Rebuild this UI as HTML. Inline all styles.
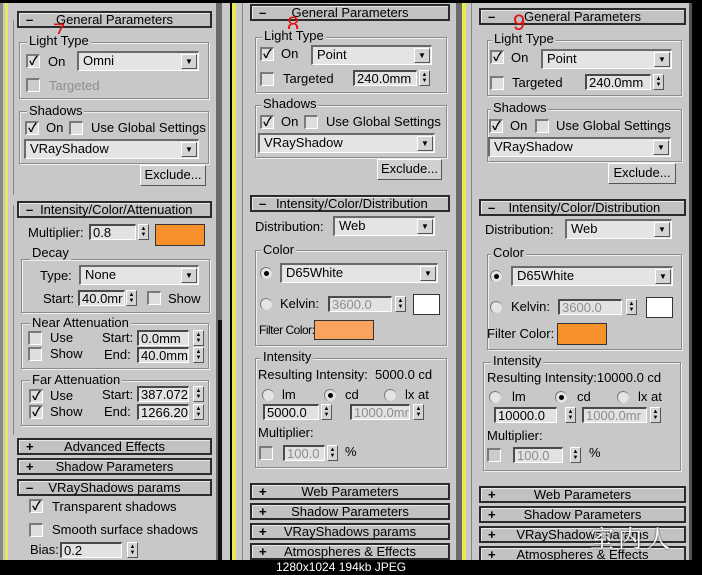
<!DOCTYPE html>
<html><head><meta charset="utf-8"><style>
*{box-sizing:border-box;margin:0;padding:0}
body{width:702px;height:575px;background:#000;position:relative;overflow:hidden;font-family:"Liberation Sans","Noto Sans CJK SC",sans-serif;font-size:13px;color:#000}
div,span{position:absolute}
.p{background:#c8c8c8}
.h{height:17px;border:2px solid #2b2b2b;background:#c2c2c2;text-align:center;line-height:13px;font-size:13px;box-shadow:inset 1px 1px 0 #e8e8e8}
.h b{position:absolute;left:7px;top:0;font-weight:bold}
.g{border:1px solid #8a8a8a;box-shadow:1px 1px 0 #eee,inset 1px 1px 0 #eee}
.l{background:#c8c8c8;padding:0 2px;line-height:14px;white-space:nowrap}
.t{line-height:14px;white-space:nowrap}
.d{color:#8e8e8e}
.cb{width:14px;height:14px;background:#dedede;border-top:2px solid #7a7a7a;border-left:2px solid #7a7a7a;border-right:1px solid #fff;border-bottom:1px solid #fff;font-size:12px;line-height:11px;text-align:center;font-weight:bold}
.dd{height:20px;background:#e4e4e4;border-top:2px solid #6a6a6a;border-left:2px solid #6a6a6a;border-right:1px solid #fff;border-bottom:1px solid #fff;line-height:16px;padding-left:4px;white-space:nowrap}
.dd i{position:absolute;right:1px;top:1px;width:16px;height:15px;background:#d4d4d4;border:1px solid #fff;border-right-color:#555;border-bottom-color:#555;font-style:normal;font-size:8px;line-height:13px;text-align:center}
.f{height:16px;background:#e2e2e2;border-top:2px solid #4a4a4a;border-left:2px solid #4a4a4a;border-right:1px solid #fff;border-bottom:1px solid #fff;line-height:13px;padding-left:2px;white-space:nowrap;overflow:hidden}
.s{width:11px;height:16px;background:#d4d4d4;border:1px solid #fff;border-right-color:#555;border-bottom-color:#555;font-size:6px;line-height:6px;text-align:center;padding-top:1px}
.r{width:12px;height:12px;border-radius:50%;background:#e4e4e4;border-top:1px solid #777;border-left:1px solid #777}
.r.on::after{content:"";position:absolute;left:3px;top:3px;width:5px;height:5px;border-radius:50%;background:#000}
.btn{background:#d0d0d0;border:1px solid #fff;border-right-color:#555;border-bottom-color:#555;text-align:center;line-height:18px}
.sw{border:1px solid #333}
.num{color:#e01010;font-size:22px;line-height:22px}
</style></head><body>

<div class="p" style="left:3px;top:3px;width:227px;height:557px"></div>
<div style="left:0;top:3px;width:3px;height:557px;background:#888"></div>
<div style="left:5px;top:3px;width:3px;height:557px;background:#e8e860"></div>
<div style="left:216px;top:3px;width:6px;height:557px;background:#6a6a6a"></div>
<div style="left:218px;top:320px;width:4px;height:240px;background:#111"></div>
<div style="left:232px;top:3px;width:4px;height:557px;background:#e8e850"></div>
<div class="p" style="left:236px;top:3px;width:220px;height:557px"></div>
<div style="left:242px;top:3px;width:1px;height:557px;background:#888"></div>
<div style="left:456px;top:3px;width:6px;height:557px;background:#6a6a6a"></div>
<div style="left:462px;top:3px;width:4px;height:557px;background:#e8e850"></div>
<div class="p" style="left:466px;top:3px;width:226px;height:557px"></div>
<div style="left:471px;top:3px;width:1px;height:557px;background:#888"></div>
<div style="left:689px;top:3px;width:3px;height:557px;background:#555"></div>

<!-- PANEL 1 -->
<div style="left:13px;top:20px;width:1px;height:175px;background:#888"></div>
<div class="h" style="left:17px;top:11px;width:195px"><b>–</b>General Parameters</div>
<div class="num" style="left:53px;top:21px">7</div>
<div class="g" style="left:19px;top:42px;width:190px;height:57px"></div>
<div class="l" style="left:27px;top:34px">Light Type</div>
<div class="cb" style="left:26px;top:54px">✓</div><div class="t" style="left:48px;top:55px">On</div>
<div class="dd" style="left:77px;top:51px;width:122px">Omni<i>▼</i></div>
<div class="cb" style="left:26px;top:78px;background:#ccc"></div><div class="t d" style="left:49px;top:79px">Targeted</div>
<div class="g" style="left:19px;top:111px;width:190px;height:53px"></div>
<div class="l" style="left:27px;top:104px">Shadows</div>
<div class="cb" style="left:25px;top:121px">✓</div><div class="t" style="left:46px;top:121px">On</div>
<div class="cb" style="left:69px;top:121px"></div><div class="t" style="left:91px;top:121px">Use Global Settings</div>
<div class="dd" style="left:24px;top:139px;width:175px">VRayShadow<i>▼</i></div>
<div class="btn" style="left:140px;top:165px;width:66px;height:21px">Exclude...</div>
<div style="left:13px;top:205px;width:1px;height:230px;background:#888"></div>
<div class="h" style="left:17px;top:201px;width:195px"><b>–</b>&nbsp;Intensity/Color/Attenuation</div>
<div class="t" style="left:28px;top:226px">Multiplier:</div>
<div class="f" style="left:89px;top:224px;width:47px">0.8</div><div class="s" style="left:138px;top:224px">▲<br>▼</div>
<div class="sw" style="left:155px;top:224px;width:50px;height:22px;background:#f7902a"></div>
<div class="g" style="left:21px;top:259px;width:189px;height:54px"></div>
<div class="l" style="left:30px;top:246px">Decay</div>
<div class="t" style="left:40px;top:269px">Type:</div>
<div class="dd" style="left:79px;top:265px;width:120px">None<i>▼</i></div>
<div class="t" style="left:43px;top:292px">Start:</div>
<div class="f" style="left:78px;top:290px;width:47px">40.0mr</div><div class="s" style="left:126px;top:290px">▲<br>▼</div>
<div class="cb" style="left:147px;top:291px"></div><div class="t" style="left:168px;top:292px">Show</div>
<div class="g" style="left:21px;top:323px;width:188px;height:46px"></div>
<div class="l" style="left:30px;top:316px">Near Attenuation</div>
<div class="cb" style="left:28px;top:331px"></div><div class="t" style="left:50px;top:331px">Use</div>
<div class="t" style="left:102px;top:331px">Start:</div><div class="f" style="left:137px;top:330px;width:52px">0.0mm</div><div class="s" style="left:193px;top:330px">▲<br>▼</div>
<div class="cb" style="left:28px;top:347px"></div><div class="t" style="left:50px;top:347px">Show</div>
<div class="t" style="left:104px;top:348px">End:</div><div class="f" style="left:137px;top:347px;width:52px">40.0mm</div><div class="s" style="left:193px;top:347px">▲<br>▼</div>
<div class="g" style="left:21px;top:380px;width:188px;height:46px"></div>
<div class="l" style="left:30px;top:373px">Far Attenuation</div>
<div class="cb" style="left:29px;top:389px">✓</div><div class="t" style="left:50px;top:389px">Use</div>
<div class="t" style="left:102px;top:388px">Start:</div><div class="f" style="left:137px;top:386px;width:52px">387.072</div><div class="s" style="left:193px;top:386px">▲<br>▼</div>
<div class="cb" style="left:29px;top:405px">✓</div><div class="t" style="left:50px;top:405px">Show</div>
<div class="t" style="left:104px;top:405px">End:</div><div class="f" style="left:137px;top:404px;width:52px">1266.20</div><div class="s" style="left:193px;top:404px">▲<br>▼</div>
<div class="h" style="left:17px;top:438px;width:195px"><b>+</b>Advanced Effects</div>
<div class="h" style="left:17px;top:458px;width:195px"><b>+</b>Shadow Parameters</div>
<div class="h" style="left:17px;top:479px;width:195px"><b>–</b>VRayShadows params</div>
<div class="cb" style="left:29px;top:499px">✓</div><div class="t" style="left:52px;top:500px">Transparent shadows</div>
<div class="cb" style="left:29px;top:523px"></div><div class="t" style="left:52px;top:523px">Smooth surface shadows</div>
<div class="t" style="left:30px;top:543px">Bias:</div>
<div class="f" style="left:60px;top:542px;width:62px">0.2</div><div class="s" style="left:127px;top:542px">▲<br>▼</div>

<!-- PANEL 2 -->
<div class="h" style="left:250px;top:4px;width:200px"><b>–</b>General Parameters</div>
<div class="num" style="left:287px;top:14px">8</div>
<div class="g" style="left:255px;top:37px;width:192px;height:56px"></div>
<div class="l" style="left:262px;top:29px">Light Type</div>
<div class="cb" style="left:260px;top:47px">✓</div><div class="t" style="left:281px;top:47px">On</div>
<div class="dd" style="left:311px;top:45px;width:121px">Point<i>▼</i></div>
<div class="cb" style="left:260px;top:72px"></div><div class="t" style="left:283px;top:72px">Targeted</div>
<div class="f" style="left:353px;top:70px;width:64px">240.0mm</div><div class="s" style="left:419px;top:70px">▲<br>▼</div>
<div class="g" style="left:255px;top:105px;width:192px;height:53px"></div>
<div class="l" style="left:261px;top:97px">Shadows</div>
<div class="cb" style="left:260px;top:115px">✓</div><div class="t" style="left:281px;top:115px">On</div>
<div class="cb" style="left:304px;top:115px"></div><div class="t" style="left:326px;top:115px">Use Global Settings</div>
<div class="dd" style="left:258px;top:133px;width:177px">VRayShadow<i>▼</i></div>
<div class="btn" style="left:377px;top:159px;width:65px;height:21px">Exclude...</div>
<div class="h" style="left:250px;top:195px;width:200px"><b>–</b>&nbsp;Intensity/Color/Distribution</div>
<div class="t" style="left:255px;top:220px">Distribution:</div>
<div class="dd" style="left:333px;top:216px;width:102px">Web<i>▼</i></div>
<div class="g" style="left:255px;top:250px;width:192px;height:96px"></div>
<div class="l" style="left:261px;top:243px">Color</div>
<div class="r on" style="left:260px;top:267px"></div>
<div class="dd" style="left:280px;top:263px;width:158px">D65White<i>▼</i></div>
<div class="r" style="left:260px;top:298px"></div><div class="t" style="left:280px;top:297px">Kelvin:</div>
<div class="f d" style="left:328px;top:296px;width:64px">3600.0</div><div class="s" style="left:395px;top:296px">▲<br>▼</div>
<div class="sw" style="left:413px;top:294px;width:27px;height:21px;background:#fff"></div>
<div class="t" style="left:259px;top:323px;letter-spacing:-0.5px;font-size:12px">Filter Color:</div>
<div class="sw" style="left:314px;top:320px;width:60px;height:20px;background:#f8a45e"></div>
<div class="g" style="left:255px;top:358px;width:192px;height:110px"></div>
<div class="l" style="left:261px;top:350px">Intensity</div>
<div class="t" style="left:258px;top:368px">Resulting Intensity:&nbsp; 5000.0 cd</div>
<div class="r" style="left:262px;top:389px"></div><div class="t" style="left:282px;top:388px">lm</div>
<div class="r on" style="left:324px;top:389px"></div><div class="t" style="left:345px;top:388px">cd</div>
<div class="r" style="left:384px;top:389px"></div><div class="t" style="left:405px;top:388px">lx at</div>
<div class="f" style="left:263px;top:404px;width:56px">5000.0</div><div class="s" style="left:321px;top:404px">▲<br>▼</div>
<div class="f d" style="left:350px;top:404px;width:60px">1000.0mr</div><div class="s" style="left:413px;top:404px">▲<br>▼</div>
<div class="t" style="left:258px;top:426px">Multiplier:</div>
<div class="cb" style="left:259px;top:446px;background:#ccc"></div>
<div class="f d" style="left:283px;top:445px;width:42px">100.0</div><div class="s" style="left:327px;top:445px">▲<br>▼</div>
<div class="t" style="left:345px;top:445px">%</div>
<div class="h" style="left:250px;top:483px;width:200px"><b>+</b>Web Parameters</div>
<div class="h" style="left:250px;top:503px;width:200px"><b>+</b>Shadow Parameters</div>
<div class="h" style="left:250px;top:523px;width:200px"><b>+</b>VRayShadows params</div>
<div class="h" style="left:250px;top:543px;width:200px"><b>+</b>Atmospheres &amp; Effects</div>

<!-- PANEL 3 -->
<div class="h" style="left:479px;top:8px;width:207px"><b>–</b>General Parameters</div>
<div class="num" style="left:513px;top:12px">9</div>
<div class="g" style="left:487px;top:40px;width:195px;height:56px"></div>
<div class="l" style="left:492px;top:32px">Light Type</div>
<div class="cb" style="left:490px;top:50px">✓</div><div class="t" style="left:511px;top:51px">On</div>
<div class="dd" style="left:541px;top:49px;width:131px">Point<i>▼</i></div>
<div class="cb" style="left:490px;top:76px"></div><div class="t" style="left:512px;top:76px">Targeted</div>
<div class="f" style="left:585px;top:74px;width:66px">240.0mm</div><div class="s" style="left:653px;top:74px">▲<br>▼</div>
<div class="g" style="left:487px;top:109px;width:195px;height:53px"></div>
<div class="l" style="left:491px;top:101px">Shadows</div>
<div class="cb" style="left:489px;top:119px">✓</div><div class="t" style="left:510px;top:119px">On</div>
<div class="cb" style="left:535px;top:119px"></div><div class="t" style="left:556px;top:119px">Use Global Settings</div>
<div class="dd" style="left:488px;top:137px;width:183px">VRayShadow<i>▼</i></div>
<div class="btn" style="left:608px;top:163px;width:68px;height:21px">Exclude...</div>
<div class="h" style="left:479px;top:199px;width:207px"><b>–</b>&nbsp;Intensity/Color/Distribution</div>
<div class="t" style="left:485px;top:223px">Distribution:</div>
<div class="dd" style="left:565px;top:219px;width:107px">Web<i>▼</i></div>
<div class="g" style="left:487px;top:254px;width:195px;height:96px"></div>
<div class="l" style="left:491px;top:246px">Color</div>
<div class="r on" style="left:490px;top:270px"></div>
<div class="dd" style="left:511px;top:266px;width:162px">D65White<i>▼</i></div>
<div class="r" style="left:490px;top:301px"></div><div class="t" style="left:511px;top:300px">Kelvin:</div>
<div class="f d" style="left:558px;top:299px;width:64px">3600.0</div><div class="s" style="left:626px;top:299px">▲<br>▼</div>
<div class="sw" style="left:646px;top:297px;width:27px;height:21px;background:#fff"></div>
<div class="t" style="left:487px;top:327px">Filter Color:</div>
<div class="sw" style="left:557px;top:323px;width:50px;height:22px;background:#f7912a"></div>
<div class="g" style="left:483px;top:362px;width:198px;height:109px"></div>
<div class="l" style="left:491px;top:354px">Intensity</div>
<div class="t" style="left:487px;top:371px">Resulting Intensity:10000.0 cd</div>
<div class="r" style="left:489px;top:391px"></div><div class="t" style="left:512px;top:390px">lm</div>
<div class="r on" style="left:555px;top:391px"></div><div class="t" style="left:577px;top:390px">cd</div>
<div class="r" style="left:617px;top:391px"></div><div class="t" style="left:638px;top:390px">lx at</div>
<div class="f" style="left:494px;top:407px;width:63px">10000.0</div><div class="s" style="left:565px;top:407px">▲<br>▼</div>
<div class="f d" style="left:582px;top:407px;width:65px">1000.0mr</div><div class="s" style="left:650px;top:407px">▲<br>▼</div>
<div class="t" style="left:487px;top:429px">Multiplier:</div>
<div class="cb" style="left:487px;top:448px;background:#ccc"></div>
<div class="f d" style="left:513px;top:447px;width:50px">100.0</div><div class="s" style="left:570px;top:447px">▲<br>▼</div>
<div class="t" style="left:589px;top:446px">%</div>
<div class="h" style="left:479px;top:486px;width:207px"><b>+</b>Web Parameters</div>
<div class="h" style="left:479px;top:506px;width:207px"><b>+</b>Shadow Parameters</div>
<div class="h" style="left:479px;top:526px;width:207px"><b>+</b>VRayShadows params</div>
<div class="h" style="left:479px;top:546px;width:207px"><b>+</b>Atmospheres &amp; Effects</div>
<div style="left:590px;top:523px;color:#fff;font-size:24px;line-height:28px;letter-spacing:4px;text-shadow:0 0 2px #333;font-family:'Noto Serif CJK SC','WenQuanYi Zen Hei',serif">室内人</div>

<div style="left:0;top:560px;width:702px;height:15px;background:#000"></div>
<div style="left:276px;top:561px;color:#fff;font-size:12px;line-height:13px;font-family:'Liberation Sans',sans-serif">1280x1024 194kb JPEG</div>
</body></html>
